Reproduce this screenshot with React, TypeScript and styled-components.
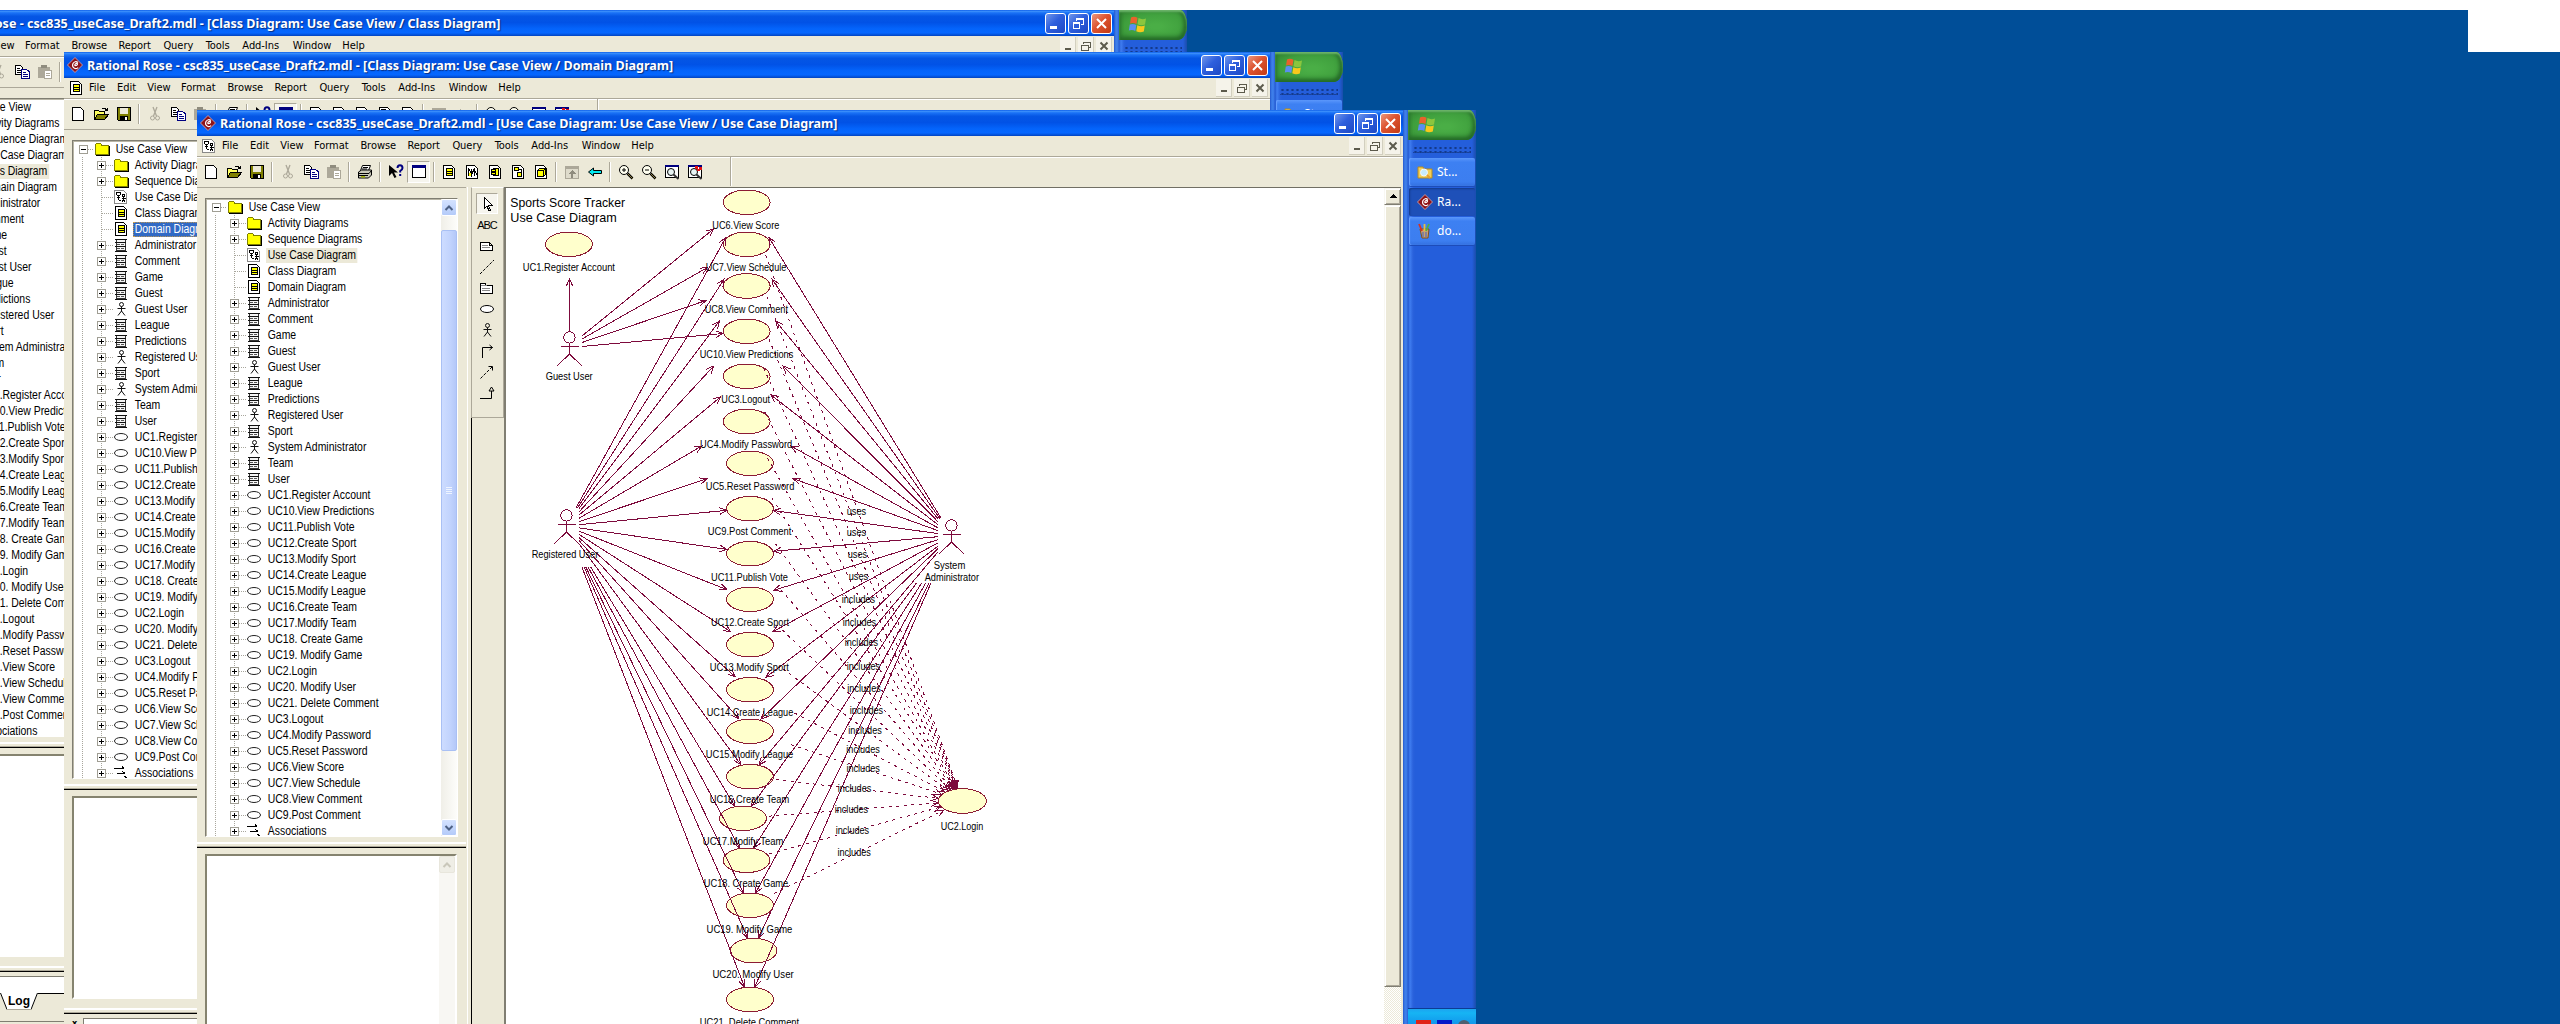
import React from "react";
import styled, { createGlobalStyle, css } from "styled-components";

const FACE = "#ece9d8";
const UI = `"DejaVu Sans Condensed", "Noto Sans", sans-serif`;
const TREE = `"Liberation Sans", sans-serif`;
const INK = "#7d0a3c";

const Page = createGlobalStyle`
  body { margin: 0; background: #fff; overflow: hidden; }
  *, *::before, *::after { box-sizing: border-box; }
  svg { display: block; flex: none; }
`;

const Screen = styled.div`
  position: relative;
  width: 2560px;
  height: 1024px;
  overflow: hidden;
  background: #fff;
  padding-top: 10px;
`;
const Wallpaper = styled.div`
  height: 1014px;
  background: #004e98;
`;
const Notch = styled.div`
  width: 92px;
  height: 42px;
  margin-left: auto;
  background: #fff;
`;

/* ---------- desktop sessions ---------- */
const SessionBox = styled.div<{ $x: number; $y: number }>`
  position: absolute;
  left: ${(p) => p.$x}px;
  top: ${(p) => p.$y}px;
  width: 1279px;
  height: 1024px;
  display: flex;
  background: #245edb;
`;
const WindowFrame = styled.div`
  width: 1206px;
  height: 1024px;
  display: flex;
  flex-direction: column;
  background: ${FACE};
`;
const TitleBar = styled.div`
  height: 26px;
  flex: none;
  display: flex;
  align-items: center;
  padding: 0 2px 0 3px;
  background: linear-gradient(#0a5be8 0, #3c90fb 5%, #1a72f6 11%, #0556e4 24%, #0152e6 48%, #0464fb 72%, #0667ff 88%, #0350d6 96%, #0243bf 100%);
`;
const TitleText = styled.div`
  flex: 1;
  margin-left: 4px;
  color: #fff;
  white-space: nowrap;
  font: bold 13px/24px "Noto Sans", "Open Sans", sans-serif;
  text-shadow: 1px 1px 1px #0a2f80;
  & > span { display: inline-block; transform-origin: 0 50%; transform: scaleX(0.966); }
`;
const CaptionButtons = styled.div`
  display: flex;
  gap: 2px;
`;
const CaptionButton = styled.div<{ $close?: boolean }>`
  width: 21px;
  height: 21px;
  border: 1px solid #fff;
  border-radius: 3px;
  background: ${(p) =>
    p.$close
      ? "linear-gradient(135deg, #e9977e, #dd5330 45%, #c23a14)"
      : "linear-gradient(135deg, #7096ea, #2e5fdd 45%, #1d48c4)"};
`;
const MenuBar = styled.div`
  height: 20px;
  flex: none;
  display: flex;
  align-items: center;
  padding: 0 2px 0 4px;
`;
const MenuIcon = styled.div`
  width: 21px;
`;
const MenuItem = styled.div<{ $w: number }>`
  width: ${(p) => p.$w}px;
  font: 11px/20px ${UI};
  color: #000;
  white-space: nowrap;
  letter-spacing: -0.05px;
`;
const MdiButtons = styled.div`
  margin-left: auto;
  display: flex;
  gap: 2px;
`;
const MdiButton = styled.div`
  width: 16px;
  height: 18px;
  background: #f5f3ea;
  border-right: 1px solid #d2cfbf;
  border-bottom: 1px solid #d2cfbf;
  display: flex;
  align-items: center;
  justify-content: center;
`;
const Etch = styled.div`
  height: 2px;
  flex: none;
  background: #fff;
  border-top: 1px solid #aca899;
`;
const ToolBar = styled.div`
  height: 29px;
  flex: none;
  display: flex;
  align-items: center;
  padding: 0 0 2px 2px;
`;
const ToolSlot = styled.div<{ $w?: number; $pressed?: boolean }>`
  width: ${(p) => p.$w ?? 23}px;
  height: 22px;
  flex: none;
  display: flex;
  align-items: center;
  justify-content: center;
  ${(p) =>
    p.$pressed &&
    css`
      background: #f6f5ee;
      border: 1px solid;
      border-color: #aca899 #fff #fff #aca899;
    `}
`;
const ToolSep = styled.div<{ $w: number; $tall?: boolean }>`
  width: ${(p) => p.$w}px;
  height: ${(p) => (p.$tall ? 29 : 20)}px;
  flex: none;
  display: flex;
  justify-content: center;
  &::before {
    content: "";
    width: 2px;
    background: #aca899;
    border-right: 1px solid #fff;
  }
`;
const Body = styled.div`
  height: 885px;
  flex: none;
  display: flex;
`;
const LeftDock = styled.div`
  width: 269px;
  flex: none;
  display: flex;
  flex-direction: column;
  border-top: 1px solid #aca899;
  padding-top: 10px;
`;
const TreeBox = styled.div`
  height: 639px;
  width: 253px;
  flex: none;
  margin-left: 8px;
  display: flex;
  background: #fff;
  border: 1px solid;
  border-color: #807e72 #fff #fff #807e72;
  box-shadow: inset 1px 1px 0 #b9b6a6;
`;
const TreeRows = styled.div`
  flex: 1;
  overflow: hidden;
  padding-left: 5px;
`;
const Row = styled.div<{ $depth: number }>`
  height: 16px;
  display: flex;
  align-items: center;
  padding-left: ${(p) => (p.$depth ? 0 : 1)}px;
`;
const RowText = styled.div<{ $sel?: "grey" | "blue" }>`
  font: 12px/15px ${TREE};
  color: ${(p) => (p.$sel === "blue" ? "#fff" : "#000")};
  transform: scaleX(0.87);
  transform-origin: 0 50%;
  white-space: nowrap;
  padding: 0 2px;
  margin-left: 4px;
  background: ${(p) => (p.$sel === "blue" ? "#316ac5" : p.$sel === "grey" ? FACE : "transparent")};
  outline: ${(p) => (p.$sel === "blue" ? "1px dotted #d8a040" : "none")};
  outline-offset: -1px;
`;
const ScrollColumn = styled.div<{ $off?: boolean }>`
  width: 16px;
  display: flex;
  flex-direction: column;
  background: ${(p) => (p.$off ? "#f8f7f3" : "linear-gradient(90deg, #f0efe8, #fdfdfa)")};
`;
const ScrollButton = styled.div<{ $off?: boolean }>`
  width: 16px;
  height: 17px;
  flex: none;
  border: 1px solid ${(p) => (p.$off ? "#e8e6dc" : "#fff")};
  border-radius: 2px;
  background: ${(p) => (p.$off ? "#efeee6" : "linear-gradient(#d4e2ff, #b4cbf9)")};
  display: flex;
  align-items: center;
  justify-content: center;
`;
const TreeThumb = styled.div`
  margin: 14px 0 68px;
  flex: 1;
  border: 1px solid #a9c0f4;
  border-radius: 2px;
  background: linear-gradient(90deg, #cddcff, #c1d3fd 60%, #b4c8f8);
  display: flex;
  align-items: center;
  justify-content: center;
`;
const Splitter = styled.div<{ $h: number }>`
  height: ${(p) => p.$h}px;
  flex: none;
  display: flex;
  flex-direction: column;
  justify-content: flex-end;
  &::before { content: ""; height: 2px; background: #fff; margin-bottom: 2px; }
  &::after { content: ""; height: 2px; background: #000; border-top: 1px solid #aca899; }
`;
const DocBox = styled.div`
  height: 203px;
  width: 252px;
  margin: 6px 0 0 8px;
  flex: none;
  display: flex;
  justify-content: flex-end;
  background: #fff;
  border: 2px solid;
  border-color: #85836f #fff #fff #85836f;
`;
const ToolboxColumn = styled.div`
  width: 37px;
  margin-left: 1px;
  flex: none;
  display: flex;
  flex-direction: column;
  border-left: 1px solid #fff;
  padding-left: 3px;
`;
const Toolbox = styled.div`
  height: 231px;
  flex: none;
  display: flex;
  flex-direction: column;
  padding: 5px 0 0 4px;
  border: 1px solid;
  border-color: #fff #aca899 #aca899 #aca899;
`;
const PaletteButton = styled.div<{ $pressed?: boolean }>`
  width: 22px;
  height: 21.1px;
  display: flex;
  align-items: center;
  justify-content: center;
  font: 11px/20px ${TREE};
  letter-spacing: -1px;
  ${(p) =>
    p.$pressed &&
    css`
      background: #f6f5ee;
      border: 1px solid;
      border-color: #aca899 #fff #fff #aca899;
    `}
`;
const ToolboxRest = styled.div`
  flex: 1;
  border-left: 1px solid #000;
`;
const Canvas = styled.div`
  flex: 1;
  display: flex;
  margin-right: 2px;
  background: #fff;
  border-top: 1px solid #716f64;
  border-left: 2px solid #807e72;
  overflow: hidden;
`;
const Drawing = styled.div`
  flex: 1;
  overflow: hidden;
`;
const CanvasScroll = styled.div`
  width: 17px;
  display: flex;
  flex-direction: column;
  background: repeating-conic-gradient(#fff 0 25%, ${FACE} 0 50%) 0 0 / 2px 2px;
`;
const RaisedButton = styled.div<{ $h: number }>`
  height: ${(p) => p.$h}px;
  background: ${FACE};
  border: 1px solid;
  border-color: #f8f7f2 #807e72 #807e72 #f8f7f2;
  box-shadow: inset 1px 1px 0 #fff, inset -1px -1px 0 #aca899;
  display: flex;
  align-items: center;
  justify-content: center;
`;
const LogPane = styled.div`
  flex: 1;
  display: flex;
  padding: 4px 0 12px 8px;
`;
const LogClose = styled.div`
  width: 11px;
  font: bold 9px/10px ${UI};
`;
const LogBox = styled.div`
  flex: 1;
  border: 1px solid #807e72;
  display: flex;
  flex-direction: column;
`;
const LogArea = styled.div`
  height: 16px;
  background: #fff;
`;
const LogTabs = styled.div`
  height: 17px;
  display: flex;
  padding-left: 72px;
`;
const LogTab = styled.div`
  width: 24px;
  height: 17px;
  background: #fff;
  border-bottom: 1px solid #aca899;
  font: bold 12px/16px ${TREE};
  text-align: center;
`;
const LogRule = styled.div`
  flex: 1;
  border-top: 1px solid #000;
`;

/* ---------- taskbar ---------- */
const TaskBar = styled.div`
  width: 73px;
  display: flex;
  flex-direction: column;
  padding-left: 5px;
  background: linear-gradient(90deg, #2458cc 0, #3f80ea 2px, #3a78e6 4px, #2358cf 5px, #3f7df0 7px, #2a62dc 10px, #245edb 12px, #245edb 69px, #1a4dab 73px);
`;
const StartButton = styled.div`
  height: 30px;
  border-radius: 0 7px 9px 0 / 0 15px 15px 0;
  background: radial-gradient(ellipse at 55% 55%, #4aae46 10%, #3f9f3d 60%, #2f7f30);
  box-shadow: inset 0 2px 2px #6cb56a, inset 0 -3px 4px #256b28, inset -3px 0 4px #286b2b, inset 2px 0 3px #2f7f30;
  padding: 5px 0 0 9px;
`;
const Grip = styled.div`
  height: 7px;
  margin: 6px 5px 5px 5px;
  background: radial-gradient(circle, #143a8c 1px, transparent 1.3px) 0 0 / 5px 4px, radial-gradient(circle, #143a8c 1px, transparent 1.3px) 2.5px 3px / 5px 8px;
`;
const TaskButton = styled.div<{ $active?: boolean }>`
  height: 28px;
  flex: none;
  margin: 0 1px 1.5px 1px;
  padding-left: 8px;
  display: flex;
  align-items: center;
  gap: 4px;
  border-radius: 2px;
  font: 12px/26px "Noto Sans", "Open Sans", sans-serif;
  color: #fff;
  background: ${(p) => (p.$active ? "#1e50b8" : "linear-gradient(#5a96fb, #3d80f2 15%, #3c7ef0 85%, #3370e0)")};
  box-shadow: ${(p) => (p.$active ? "inset 1px 1px 2px #143a8c" : "inset 1px 0 1px #6aa2ff, 0 1px 0 #1c4cba")};
`;
const Tray = styled.div`
  margin-top: auto;
  flex: none;
  height: 126px;
  padding: 11px 0 0 8px;
  display: flex;
  align-items: flex-start;
  gap: 6px;
  border-top: 1px solid #0c3c94;
  background: linear-gradient(#1ca4f0, #16b4f4 4px, #129aec 14px);
`;
const TrayIcon = styled.div<{ $c: string; $round?: boolean }>`
  width: ${(p) => (p.$round ? 12 : 15)}px;
  height: 14px;
  border-radius: ${(p) => (p.$round ? "7px" : "0")};
  background: ${(p) => p.$c};
`;

/* ---------- icons ---------- */
const Ico = ({ w = 16, h = 16, crisp = true, children }: { w?: number; h?: number; crisp?: boolean; children: React.ReactNode }) => (
  <svg width={w} height={h} viewBox={`0 0 ${w} ${h}`} shapeRendering={crisp ? "crispEdges" : "auto"} fill="none">
    {children}
  </svg>
);
const Sheet = ({ children }: { children?: React.ReactNode }) => (
  <Ico>
    <path d="M2.500 1.500h8l3 3v10h-11z" fill="#fff" stroke="#000" />
    {children}
  </Ico>
);
const Rose = () => (
  <Ico crisp={false}>
    <path d="M8 .5 15.500 8 8 15.500.5 8z" fill="#8e1218" stroke="#e0b0b0" strokeWidth=".8" />
    <path d="M11 5.500Q8 3.500 6 6.500 4.500 10 8 11.500q2 .5 3-1M7.500 8.500Q10.500 8.800 10.500 6.800 9 5.500 7.500 8.500" stroke="#fff" strokeWidth="1.2" />
  </Ico>
);
const ClassDoc = () => (
  <Sheet>
    <path d="M5.500 4.500h6v3h-6zM5.500 7.500h6v4h-6z" fill="#ff0" stroke="#000" />
    <path d="M6 9.500h5" stroke="#000" />
  </Sheet>
);
const UseCaseDoc = () => (
  <Ico>
    <path d="M1.500 1.500h9l3 3v10h-12z" fill="#fff" stroke="#888" />
    <path d="M3 3.500h5M3 4v2M7.500 4v2M4 6.500h3M5.500 7v4M4 8.500h3M6 11.500h2" stroke="#000" />
    <path d="M9.500 5.500h2v2h-2zM10.500 8v3M8.500 9.500h4" stroke="#000" />
    <path d="M10.500 11l-2 2.500M10.500 11l2 2.500" stroke="#000" />
  </Ico>
);
const Folder = () => (
  <Ico>
    <path d="M1.500 4V3.500l1-1h4l1 1.500h7v9.500h-13z" fill="#ff0" stroke="#808000" />
    <path d="M15 4.500v10H2" stroke="#000" />
  </Ico>
);
const ClassNode = () => (
  <Ico>
    <path d="M3.500 2.500h9v11h-9z" fill="#f4f4f4" stroke="#333" />
    <path d="M2 2.500h12M2 5.500h11M2 9.500h11M2 14.500h12" stroke="#111" />
    <path d="M4 7.500h8M4 11.500h8" stroke="#555" strokeDasharray="3 1" />
  </Ico>
);
const ActorNode = () => (
  <Ico crisp={false}>
    <circle cx="8.500" cy="3.500" r="2" stroke="#111" />
    <path d="M8.500 5.500v5M4.500 7.500h8M8.500 10l-3.500 4.500M8.500 10l3.500 4.500" stroke="#111" />
  </Ico>
);
const UseCaseNode = () => (
  <Ico crisp={false}>
    <ellipse cx="8" cy="8" rx="6.500" ry="3.500" fill="#fff" stroke="#222" />
  </Ico>
);
const AssocNode = () => (
  <Ico>
    <path d="M1 3.500h10M9 1.500l2 2M4 8.500h8M9.500 6.500l2.500 2M4 13.500h10M11.500 11l2.500 2.500" stroke="#000" />
  </Ico>
);
const Expander = ({ open }: { open?: boolean }) => (
  <Ico w={9} h={9}>
    <path d="M.5.5h8v8h-8z" fill="#fff" stroke="#a09e94" />
    <path d={open ? "M2 4.500h5" : "M2 4.500h5M4.500 2v5"} stroke="#000" />
  </Ico>
);
const Magnifier = ({ plus }: { plus?: boolean }) => (
  <Ico crisp={false}>
    <circle cx="6" cy="6" r="4.500" fill="#fffff0" stroke="#000" />
    <path d={plus ? "M4 6h4M6 4v4" : "M4 6h4"} stroke="#000" />
    <path d="M9.500 9.500l5 5" stroke="#000" strokeWidth="2.500" />
    <path d="M10 10l4.500 4.500" stroke="#908040" />
  </Ico>
);
const Fit = ({ red }: { red?: boolean }) => (
  <Ico>
    <path d="M1.500 1.500h13v12h-13z" fill="#fff" stroke="#000" />
    <path d="M1 2h14" stroke="#000080" strokeWidth="2" />
    <circle cx="7" cy="8" r="3.500" fill="#e8f4f4" stroke="#000" shapeRendering="auto" />
    <path d="M9.500 10.500l5 4.500" stroke="#333" strokeWidth="2" shapeRendering="auto" />
    {red && <path d="M8 2h3v3H8zM12 3h3v3h-3zM10 5h3v2h-3z" fill="#e01010" />}
  </Ico>
);
const Icons = {
  fresh: <Sheet />,
  open: (
    <Ico>
      <path d="M1.500 13.500v-9h4l1 1h5v3" fill="#ffff60" stroke="#000" />
      <path d="M1.500 13.500l3-5h11l-4 5z" fill="#808000" stroke="#000" />
      <path d="M9 2.500h3l2 2M14.500 1.500v3h-3" stroke="#000" />
    </Ico>
  ),
  save: (
    <Ico>
      <path d="M1.500 1.500h13v13h-12l-1-1z" fill="#808000" stroke="#000" />
      <path d="M4 2h8v6H4z" fill={FACE} />
      <path d="M4 10h8v5H4z" fill="#000" />
      <path d="M9 11h2v3H9z" fill="#fff" />
    </Ico>
  ),
  cut: (
    <Ico crisp={false}>
      <path d="M6 1l3.500 9M10 1L6.500 10" stroke="#aca899" strokeWidth="1.300" />
      <circle cx="5.500" cy="12" r="2" stroke="#aca899" />
      <circle cx="10.500" cy="12" r="2" stroke="#aca899" />
    </Ico>
  ),
  copy: (
    <Ico>
      <path d="M1.500 1.500h5l2 2v7h-7z" fill="#fff" stroke="#000" />
      <path d="M3 4.500h3M3 6.500h4M3 8.500h4" stroke="#000" />
      <path d="M7.500 5.500h5l2.500 2v7h-7.500z" fill="#fff" stroke="#000080" />
      <path d="M9 8.500h3M9 10.500h5M9 12.500h5" stroke="#000080" />
    </Ico>
  ),
  paste: (
    <Ico>
      <path d="M1 3h12v11H1z" fill="#aca899" />
      <path d="M4 1h6v3H4z" fill="#8f8c7e" />
      <path d="M7.500 6.500h7v8h-7z" fill="#fff" stroke="#aca899" />
      <path d="M9 9.500h4M9 11.500h4" stroke="#aca899" />
    </Ico>
  ),
  print: (
    <Ico crisp={false}>
      <path d="M5.500 1.500h8l-2 5h-8z" fill="#fff" stroke="#000" />
      <path d="M1.500 8l3-2h10v5l-3 3h-10z" fill="#c8c8b8" stroke="#000" />
      <path d="M2 9.500h10l2.500-3M2 11.500h9M6 3.500h5M5 5h5" stroke="#000" />
      <path d="M4 12.800h4" stroke="#a0b000" strokeWidth="1.500" />
    </Ico>
  ),
  help: (
    <Ico crisp={false}>
      <path d="M1 1v11l3-3 2.500 5 2-1-2.500-4.500h4z" fill="#000" />
      <path d="M9.500 4Q9.500 1.200 12 1.200T14.500 4Q14.500 5.500 12.200 7v1.500M12.200 10v2" stroke="#000080" strokeWidth="2" />
    </Ico>
  ),
  win: (
    <Ico>
      <path d="M1.500 1.500h13v12h-13z" fill="#fff" stroke="#000" />
      <path d="M1 1h14v3H1z" fill="#000080" />
    </Ico>
  ),
  cls: <ClassDoc />,
  seq: (
    <Sheet>
      <path d="M4.500 4v8M7.500 5v8M10.500 4v8M5 5.500l2 3M8 9.500l2-4M11 7.500l2 3" stroke="#000" />
      <path d="M5 9h2v3H5z" fill="#ff0" />
    </Sheet>
  ),
  comp: (
    <Sheet>
      <path d="M6.500 4.500h5v7h-5z" fill="#ff0" stroke="#000" />
      <path d="M4.500 5.500h4v2h-4zM4.500 8.500h4v2h-4z" fill="#ff0" stroke="#000" />
    </Sheet>
  ),
  state: (
    <Sheet>
      <path d="M4.500 3.500h4v3h-4zM7.500 8.500h4v4h-4z" fill="#ff0" stroke="#000" />
      <path d="M9 5.500h2v3" stroke="#000" />
    </Sheet>
  ),
  deploy: (
    <Sheet>
      <path d="M4.500 6.500l2-2h6v6l-2 2h-6z" fill="#ff0" stroke="#000" />
      <path d="M5 6.500h5.500v6M10.500 6.500l2-2" stroke="#000" />
    </Sheet>
  ),
  up: (
    <Ico>
      <path d="M1.500 2.500h13v12h-13z" fill="#dedbcb" stroke="#aca899" />
      <path d="M1 2h14v3H1z" fill="#aca899" />
      <path d="M8 6l4 4H9v4H7v-4H4z" fill="#8f8c7e" />
    </Ico>
  ),
  back: (
    <Ico crisp={false}>
      <path d="M1.500 8l5-4v2.500h8v3h-8V12z" fill="#00e8f0" stroke="#000" />
    </Ico>
  ),
};
const Flag = () => (
  <Ico w={20} h={19} crisp={false}>
    <path d="M3 2.500Q6 1 9.500 2.800L8.500 9Q5.500 7.500 2 8.500z" fill="#e8622c" />
    <path d="M10.500 3Q14 5 18 3.500L17 9.500Q13 11 9.500 9.300z" fill="#8bc63e" />
    <path d="M1.800 9.500Q5 8.500 8.300 10L7.300 16Q4.500 14.500.8 15.500z" fill="#5a8ef0" />
    <path d="M9.300 10.300Q13 12 16.800 10.500L15.800 16.500Q12 18 8.300 16.300z" fill="#f8c81c" />
  </Ico>
);
const FolderTask = () => (
  <Ico crisp={false}>
    <path d="M1 3h5l1 2h8v9H1z" fill="#f4cf58" stroke="#b48a20" />
    <circle cx="7" cy="8.500" r="3.500" fill="#c8ecfc" stroke="#f4f8fc" />
    <path d="M10 11l3 3" stroke="#e8a030" strokeWidth="2" />
  </Ico>
);
const PaintTask = () => (
  <Ico crisp={false}>
    <path d="M3 6h9l-1 9H5z" fill="#c8a070" stroke="#805020" />
    <path d="M5 8L2 1" stroke="#d83020" strokeWidth="1.800" />
    <path d="M7.500 8V1" stroke="#e8c040" strokeWidth="1.800" />
    <path d="M9 8l3-7" stroke="#50b040" strokeWidth="1.800" />
    <path d="M6 9v5M9 9v5" stroke="#4060c0" />
  </Ico>
);

const Caption = () => (
  <CaptionButtons>
    <CaptionButton>
      <Ico w={19} h={19}><path d="M4 12h7v3H4z" fill="#fff" /></Ico>
    </CaptionButton>
    <CaptionButton>
      <Ico w={19} h={19}>
        <path d="M7.500 7V4.500h7v6H12M7 5.500h8" stroke="#fff" />
        <path d="M4.500 8.500h6v6h-6zM4 9.500h7" stroke="#fff" />
      </Ico>
    </CaptionButton>
    <CaptionButton $close>
      <Ico w={19} h={19} crisp={false}><path d="M5 5l9 9M14 5l-9 9" stroke="#fff" strokeWidth="2" /></Ico>
    </CaptionButton>
  </CaptionButtons>
);
const Mdi = () => (
  <MdiButtons>
    <MdiButton><Ico w={10} h={10}><path d="M2 7h6v2H2z" fill="#5c5a4c" /></Ico></MdiButton>
    <MdiButton>
      <Ico w={10} h={10}><path d="M2.500 3V1.500h7v5H8M2 1h8" stroke="#5c5a4c" /><path d="M.5 4.500h7v5h-7zM0 4h8" stroke="#5c5a4c" /></Ico>
    </MdiButton>
    <MdiButton><Ico w={10} h={10} crisp={false}><path d="M1.500 1.500l7 7M8.500 1.500l-7 7" stroke="#5c5a4c" strokeWidth="2" /></Ico></MdiButton>
  </MdiButtons>
);

/* ---------- tree ---------- */
type Kind = "folder" | "ucdoc" | "cdoc" | "class" | "actor" | "uc" | "assoc";
const glyph: Record<Kind, React.ReactNode> = {
  folder: <Folder />,
  ucdoc: <UseCaseDoc />,
  cdoc: <ClassDoc />,
  class: <ClassNode />,
  actor: <ActorNode />,
  uc: <UseCaseNode />,
  assoc: <AssocNode />,
};
const nodes: [Kind, string][] = [
  ["folder", "Activity Diagrams"],
  ["folder", "Sequence Diagrams"],
  ["ucdoc", "Use Case Diagram"],
  ["cdoc", "Class Diagram"],
  ["cdoc", "Domain Diagram"],
  ["class", "Administrator"],
  ["class", "Comment"],
  ["class", "Game"],
  ["class", "Guest"],
  ["actor", "Guest User"],
  ["class", "League"],
  ["class", "Predictions"],
  ["actor", "Registered User"],
  ["class", "Sport"],
  ["actor", "System Administrator"],
  ["class", "Team"],
  ["class", "User"],
  ["uc", "UC1.Register Account"],
  ["uc", "UC10.View Predictions"],
  ["uc", "UC11.Publish Vote"],
  ["uc", "UC12.Create Sport"],
  ["uc", "UC13.Modify Sport"],
  ["uc", "UC14.Create League"],
  ["uc", "UC15.Modify League"],
  ["uc", "UC16.Create Team"],
  ["uc", "UC17.Modify Team"],
  ["uc", "UC18. Create Game"],
  ["uc", "UC19. Modify Game"],
  ["uc", "UC2.Login"],
  ["uc", "UC20. Modify User"],
  ["uc", "UC21. Delete Comment"],
  ["uc", "UC3.Logout"],
  ["uc", "UC4.Modify Password"],
  ["uc", "UC5.Reset Password"],
  ["uc", "UC6.View Score"],
  ["uc", "UC7.View Schedule"],
  ["uc", "UC8.View Comment"],
  ["uc", "UC9.Post Comment"],
  ["assoc", "Associations"],
];
const Branch = ({ leaf }: { leaf: boolean }) => (
  <Ico w={35} h={16}>
    <path d="M4.500 0v16M23.500 0v16M24 8.500h11" stroke="#a8a69c" strokeDasharray="1 1" />
    {!leaf && (
      <g transform="translate(19 4)">
        <path d="M.5.5h8v8h-8z" fill="#fff" stroke="#a09e94" />
        <path d="M2 4.500h5M4.500 2v5" stroke="#000" />
      </g>
    )}
  </Ico>
);
const Dots = () => (
  <Ico w={6} h={16}><path d="M0 8.500h6" stroke="#a8a69c" strokeDasharray="1 1" /></Ico>
);

const Tree = ({ selected, tone }: { selected: string; tone: "grey" | "blue" }) => (
  <TreeBox>
    <TreeRows>
      <Row $depth={0}>
        <Expander open />
        <Dots />
        <Folder />
        <RowText>Use Case View</RowText>
      </Row>
      {nodes.map(([kind, name]) => (
        <Row key={name} $depth={1}>
          <Branch leaf={kind === "ucdoc" || kind === "cdoc"} />
          {glyph[kind]}
          <RowText $sel={name === selected ? tone : undefined}>{name}</RowText>
        </Row>
      ))}
    </TreeRows>
    <ScrollColumn>
      <ScrollButton><Ico w={10} h={8} crisp={false}><path d="M1.500 6L5 2.500 8.500 6" stroke="#4d6185" strokeWidth="2" /></Ico></ScrollButton>
      <TreeThumb><Ico w={8} h={8}><path d="M1 .5h6M1 2.500h6M1 4.500h6M1 6.500h6" stroke="#eef4ff" /></Ico></TreeThumb>
      <ScrollButton><Ico w={10} h={8} crisp={false}><path d="M1.500 2L5 5.500 8.500 2" stroke="#4d6185" strokeWidth="2" /></Ico></ScrollButton>
    </ScrollColumn>
  </TreeBox>
);

/* ---------- use case diagram ---------- */
type Pt = [number, number];
const useCases: [string, number, number, number, number, number][] = [
  ["UC6.View Score", 746.7, 202.3, 712.3, 779.3, 225.7],
  ["UC1.Register Account", 569, 244.3, 522.7, 615, 267.7],
  ["UC7.View Schedule", 746.7, 244.3, 705.7, 786.3, 267.7],
  ["UC8.View Comment", 746.7, 286, 704.7, 788, 309.7],
  ["UC10.View Predictions", 746.7, 331.3, 699.7, 793.3, 354.7],
  ["UC3.Logout", 746.7, 376.3, 721.3, 770, 399.7],
  ["UC4.Modify Password", 746.7, 421.5, 700, 792.3, 444.7],
  ["UC5.Reset Password", 750, 463.3, 705.7, 794.3, 486.7],
  ["UC9.Post Comment", 750, 508.7, 707.7, 791.3, 531.7],
  ["UC11.Publish Vote", 750, 553.7, 711, 788, 577.5],
  ["UC12.Create Sport", 750, 599.3, 711, 789, 622.7],
  ["UC13.Modify Sport", 750, 644.7, 709.7, 789, 667.7],
  ["UC14.Create League", 750, 689.7, 706.7, 793.3, 712.7],
  ["UC15.Modify League", 750, 731.3, 705.7, 793.3, 754.7],
  ["UC16.Create Team", 750, 776.7, 709.7, 789.2, 799.7],
  ["UC17.Modify Team", 743, 818.3, 702.8, 783.4, 841.7],
  ["UC18. Create Game", 746.5, 860.3, 703.8, 788.2, 883.7],
  ["UC19. Modify Game", 750, 905.3, 706.6, 792.3, 929],
  ["UC20. Modify User", 753.6, 950.7, 712.4, 793.7, 974],
  ["UC21. Delete Comment", 750, 999.5, 699.7, 799.2, 1022.7],
  ["UC2.Login", 962.4, 801, 940.7, 983.4, 826],
];
const registeredTargets: Pt[] = [
  [725.7, 237.7], [724, 279.3], [719.5, 321], [713.7, 366], [720.7, 396.7], [701.7, 446], [707, 478.7],
  [727, 510.3], [727, 549.5], [727, 589.7], [730.7, 631.7], [735.3, 676.7], [739, 718.7], [740.7, 764.5],
  [734.8, 806], [739.3, 847.7], [743.4, 893], [747.6, 938], [744.5, 987],
];
const adminTargets: Pt[] = [
  [769, 237.7], [772, 279.3], [775.7, 321], [783, 366], [770.7, 394.7], [791, 446], [793.3, 478.7],
  [773.3, 510.5], [773.7, 551.3], [773.7, 590.3], [772.7, 631.7], [766, 677.3], [761, 719], [759, 764.7],
  [751.4, 806], [753.8, 847.7], [755.5, 893], [758.2, 938], [754.8, 987],
];
const loginSources: [number, number, number][] = [
  [746.7, 202.3, 255], [746.7, 244.3, 296.7], [746.7, 286, 339], [746.7, 331.3, 368], [746.7, 376.3, 412],
  [746.7, 421.5, 458], [750, 463.3, 498], [750, 508.7, 544], [750, 553.7, 590], [750, 599.3, 630],
  [750, 644.7, 669], [750, 689.7, 713], [750, 731.3, 744.7], [750, 776.7, 779], [743, 818.3, 816.5],
  [746.5, 860.3, 854], [750, 905.3, 893.5],
];
const stereotypes: [string, number, number][] = [
  ["uses", 846.7, 511.7], ["uses", 846.7, 532.7], ["uses", 847.7, 554], ["uses", 848.7, 576.7],
  ["includes", 841.7, 599], ["includes", 842.7, 622], ["includes", 844.7, 642.7], ["includes", 846.7, 666],
  ["includes", 847.3, 688], ["includes", 849.7, 710.7], ["includes", 848.3, 730], ["includes", 846.3, 749],
  ["includes", 846.4, 768], ["includes", 837.8, 788], ["includes", 834.7, 809], ["includes", 835.7, 830],
  ["includes", 837.4, 852],
];
const f = (n: number) => n.toFixed(1);
const head = (a: Pt, b: Pt) => {
  const t = Math.atan2(b[1] - a[1], b[0] - a[0]);
  const p = (d: number) => `${f(b[0] - 8 * Math.cos(t + d))} ${f(b[1] - 8 * Math.sin(t + d))}`;
  return `M${p(0.42)}L${f(b[0])} ${f(b[1])}L${p(-0.42)}`;
};
const Arrow = ({ a, b, dashed }: { a: Pt; b: Pt; dashed?: boolean }) => (
  <>
    <path d={`M${f(a[0])} ${f(a[1])}L${f(b[0])} ${f(b[1])}`} stroke={INK} strokeDasharray={dashed ? "3 4.500" : undefined} />
    <path d={head(a, b)} stroke={INK} />
  </>
);
/* Leaves the actor's bounding box on the way to the target; steep downward links start under the caption. */
const leave = (c: Pt, t: Pt, halfW: number, up: number, steep: number, below: number): Pt => {
  const dx = t[0] - c[0];
  const dy = t[1] - c[1];
  const s = dy / Math.abs(dx);
  let k = halfW / Math.abs(dx);
  if (dy < 0 && -dy * k > up) k = up / -dy;
  if (s > steep) k = (below - c[1]) / dy;
  return [c[0] + dx * k, c[1] + dy * k];
};
const Stick = ({ x, y }: { x: number; y: number }) => (
  <g stroke={INK}>
    <circle cx={x} cy={y} r="5.700" fill="#fff" />
    <path d={`M${x} ${y + 6}v10.500M${x - 9} ${y + 8.500}h18M${x} ${y + 16.500}l-12.500 12M${x} ${y + 16.500}l12.500 12`} />
  </g>
);
const Label = ({ x, x2, y, s = 10, children }: { x: number; x2: number; y: number; s?: number; children: string }) => (
  <text x={x} y={y + s * 0.36} textLength={x2 - x} lengthAdjust="spacingAndGlyphs" fontSize={s} fontFamily="Liberation Sans, sans-serif" fill="#000">
    {children}
  </text>
);
const LOGIN: Pt = [962.4, 801];
const Diagram = () => (
  <svg width="878" height="836" viewBox="506 188 878 836" fill="none" strokeWidth="1" shapeRendering="crispEdges">
    {useCases.map(([n, x, y]) => (
      <ellipse key={n} cx={x} cy={y} rx={n === "UC2.Login" ? 24 : 23.4} ry={12.300} fill="#ffffcc" stroke="#8c1c34" />
    ))}
    <Stick x={569.500} y={337.500} />
    <Stick x={566.500} y={515.500} />
    <Stick x={951.500} y={525.500} />
    <Arrow a={[569.500, 331]} b={[569.500, 279]} />
    <Arrow a={[582, 336]} b={[713.500, 229]} />
    <Arrow a={[582, 339]} b={[707.500, 267.500]} />
    <Arrow a={[582, 342.500]} b={[706, 300.500]} />
    <Arrow a={[582, 346.500]} b={[723, 333.500]} />
    {registeredTargets.map((t) => (
      <Arrow key={t[1]} a={leave([566, 526], t, 13, 18, 1.5, 567)} b={t} />
    ))}
    {adminTargets.map((t) => (
      <Arrow key={t[1]} a={leave([951.7, 535.5], t, 13.7, 17, 1.2, 583)} b={t} />
    ))}
    {loginSources.map(([x, y, from]) => {
      const dx = LOGIN[0] - x;
      const dy = LOGIN[1] - y;
      const k = Math.abs(dy) > 40 ? (from - y) / dy : 26 / dx;
      const m = 1 - 1 / Math.hypot(dx / 24.5, dy / 13.5);
      return <Arrow key={y} dashed a={[x + dx * k, y + dy * k]} b={[x + dx * m, y + dy * m]} />;
    })}
    {useCases.map(([n, , , x, x2, y]) => (
      <Label key={n} x={x} x2={x2} y={y}>{n}</Label>
    ))}
    {stereotypes.map(([n, x, y]) => (
      <Label key={y} x={x} x2={x + (n === "uses" ? 19.500 : 33.500)} y={y}>{n}</Label>
    ))}
    <Label x={545.700} x2={592.700} y={376.700}>Guest User</Label>
    <Label x={531.700} x2={598.300} y={554}>Registered User</Label>
    <Label x={933.700} x2={965.300} y={565}>System</Label>
    <Label x={924.700} x2={979} y={577}>Administrator</Label>
    <Label x={510.300} x2={625} y={202.700} s={13}>Sports Score Tracker</Label>
    <Label x={510.300} x2={616.700} y={217.700} s={13}>Use Case Diagram</Label>
  </svg>
);

/* ---------- window assembly ---------- */
const menus: [string, number][] = [
  ["File", 28], ["Edit", 30.3], ["View", 33.7], ["Format", 46.4], ["Browse", 47], ["Report", 45],
  ["Query", 42.3], ["Tools", 36.7], ["Add-Ins", 50.3], ["Window", 49.7], ["Help", 30],
];
const palette: React.ReactNode[] = [
  <Ico key="p"><path d="M5 1v12l3-3 2 5 1.500-.5-2-5h4z" fill="#fff" stroke="#000" /></Ico>,
  "ABC",
  <Ico key="n"><path d="M1.500 4.500h9l3 3v5h-12zM10.500 4.500v3h3" fill="#fff" stroke="#000" /><path d="M3 7.500h6M3 9.500h8" stroke="#888" /></Ico>,
  <Ico key="l" crisp={false}><path d="M1 15L15 1" stroke="#000" strokeDasharray="3 1.500" /></Ico>,
  <Ico key="k"><path d="M1.500 13.500v-10h5v2h7v8z" fill="#fff" stroke="#000" /><path d="M2 5.500h6M3 8.500h8M3 10.500h8" stroke="#888" /></Ico>,
  <Ico key="u" crisp={false}><ellipse cx="8" cy="8" rx="6.500" ry="3.500" fill="#fff" stroke="#000" /></Ico>,
  <ActorNode key="a" />,
  <Ico key="c" crisp={false}><path d="M3.500 15V4.500h10M10.500 2l3 2.500-3 2.500" stroke="#000" /></Ico>,
  <Ico key="d" crisp={false}><path d="M1.500 14.500L13 3" stroke="#000" strokeDasharray="3 1.500" /><path d="M9.500 2.500h4v4" stroke="#000" /></Ico>,
  <Ico key="g" crisp={false}><path d="M1 13.500h11.500V6M10 6l2.500-4L15 6z" stroke="#000" /></Ico>,
];

type SessionProps = { x: number; y: number; title: string; selected: string; tone: "grey" | "blue"; icon: React.ReactNode; drawing?: boolean };
const Session = ({ x, y, title, selected, tone, icon, drawing }: SessionProps) => (
  <SessionBox $x={x} $y={y}>
    <WindowFrame>
      <TitleBar>
        <Rose />
        <TitleText><span>{title}</span></TitleText>
        <Caption />
      </TitleBar>
      <MenuBar>
        <MenuIcon>{icon}</MenuIcon>
        {menus.map(([m, w]) => <MenuItem key={m} $w={w}>{m}</MenuItem>)}
        <Mdi />
      </MenuBar>
      <Etch />
      <ToolBar>
        <ToolSlot>{Icons.fresh}</ToolSlot>
        <ToolSlot>{Icons.open}</ToolSlot>
        <ToolSlot>{Icons.save}</ToolSlot>
        <ToolSep $w={8} />
        <ToolSlot>{Icons.cut}</ToolSlot>
        <ToolSlot>{Icons.copy}</ToolSlot>
        <ToolSlot>{Icons.paste}</ToolSlot>
        <ToolSep $w={8} />
        <ToolSlot>{Icons.print}</ToolSlot>
        <ToolSep $w={8} />
        <ToolSlot>{Icons.help}</ToolSlot>
        <ToolSlot $pressed>{Icons.win}</ToolSlot>
        <ToolSep $w={7} />
        <ToolSlot>{Icons.cls}</ToolSlot>
        <ToolSlot>{Icons.seq}</ToolSlot>
        <ToolSlot>{Icons.comp}</ToolSlot>
        <ToolSlot>{Icons.state}</ToolSlot>
        <ToolSlot>{Icons.deploy}</ToolSlot>
        <ToolSep $w={8} />
        <ToolSlot>{Icons.up}</ToolSlot>
        <ToolSlot>{Icons.back}</ToolSlot>
        <ToolSep $w={8} />
        <ToolSlot><Magnifier plus /></ToolSlot>
        <ToolSlot><Magnifier /></ToolSlot>
        <ToolSlot><Fit /></ToolSlot>
        <ToolSlot><Fit red /></ToolSlot>
        <ToolSep $w={50} $tall />
      </ToolBar>
      <Body>
        <LeftDock>
          <Tree selected={selected} tone={tone} />
          <Splitter $h={11} />
          <DocBox>
            <ScrollColumn $off>
              <ScrollButton $off><Ico w={10} h={8} crisp={false}><path d="M1.500 6L5 2.500 8.500 6" stroke="#c9c7ba" strokeWidth="2" /></Ico></ScrollButton>
            </ScrollColumn>
          </DocBox>
          <Splitter $h={15} />
        </LeftDock>
        <ToolboxColumn>
          <Toolbox>
            {palette.map((p, i) => <PaletteButton key={i} $pressed={i === 0}>{p}</PaletteButton>)}
          </Toolbox>
          <ToolboxRest />
        </ToolboxColumn>
        <Canvas>
          <Drawing>{drawing && <Diagram />}</Drawing>
          <CanvasScroll>
            <RaisedButton $h={17}><Ico w={8} h={5}><path d="M4 0l4 4H0z" fill="#000" /></Ico></RaisedButton>
            <RaisedButton $h={782} />
          </CanvasScroll>
        </Canvas>
      </Body>
      <LogPane>
        <LogClose>x</LogClose>
        <LogBox>
          <LogArea />
          <LogTabs>
            <Ico w={7} h={17} crisp={false}><path d="M0 0h7v17z" fill="#fff" /><path d="M.5 0L7 16.500" stroke="#000" /></Ico>
            <LogTab>Log</LogTab>
            <Ico w={7} h={17} crisp={false}><path d="M0 0h7L0 17z" fill="#fff" /><path d="M6.500 0L0 16.500" stroke="#000" /></Ico>
            <LogRule />
          </LogTabs>
        </LogBox>
      </LogPane>
    </WindowFrame>
    <TaskBar>
      <StartButton><Flag /></StartButton>
      <Grip />
      <TaskButton><FolderTask />St...</TaskButton>
      <TaskButton $active><Rose />Ra...</TaskButton>
      <TaskButton><PaintTask />do...</TaskButton>
      <Tray>
        <TrayIcon $c="#e02418" />
        <TrayIcon $c="#0418c8" />
        <TrayIcon $c="#506070" $round />
      </Tray>
    </TaskBar>
  </SessionBox>
);

export default function App() {
  return (
    <>
      <Page />
      <Screen>
        <Wallpaper><Notch /></Wallpaper>
        <Session x={-92} y={10} title="Rational Rose - csc835_useCase_Draft2.mdl - [Class Diagram: Use Case View / Class Diagram]" selected="Class Diagram" tone="grey" icon={<ClassDoc />} />
        <Session x={64} y={52} title="Rational Rose - csc835_useCase_Draft2.mdl - [Class Diagram: Use Case View / Domain Diagram]" selected="Domain Diagram" tone="blue" icon={<ClassDoc />} />
        <Session x={197} y={110} title="Rational Rose - csc835_useCase_Draft2.mdl - [Use Case Diagram: Use Case View / Use Case Diagram]" selected="Use Case Diagram" tone="grey" icon={<UseCaseDoc />} drawing />
      </Screen>
    </>
  );
}
